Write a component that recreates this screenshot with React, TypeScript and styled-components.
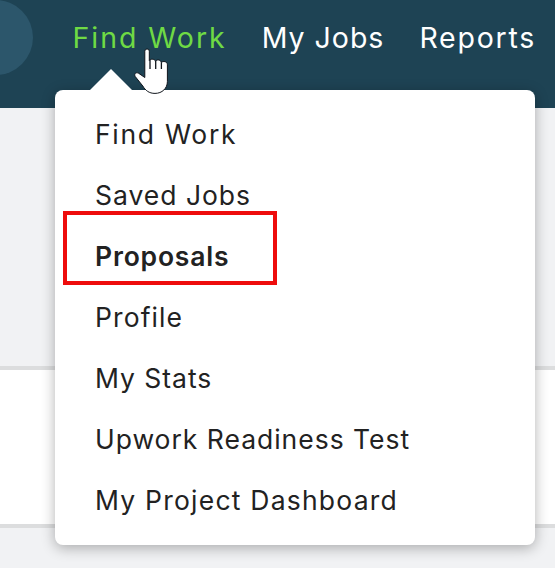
import React from "react";
import styled, { createGlobalStyle } from "styled-components";

const GlobalStyle = createGlobalStyle`
  * { box-sizing: border-box; }
  body { margin: 0; overflow: hidden; background: #f1f2f4; font-family: Inter, "Noto Sans", sans-serif; }
`;

const Page = styled.div`
  position: relative;
  display: flex;
  flex-direction: column;
  gap: 258px;
  width: 555px;
  height: 568px;
  overflow: hidden;
  background: #f1f2f4;
`;

const Header = styled.header`
  flex: none;
  display: flex;
  align-items: flex-start;
  gap: 39.5px;
  height: 108px;
  overflow: hidden;
  background: #1e4354;
`;

const SearchEnd = styled.div`
  flex: none;
  width: 75px;
  height: 75px;
  margin-left: -42px;
  border-radius: 50%;
  background: #2c566b;
`;

const Nav = styled.nav`
  flex: none;
  display: flex;
  gap: 35px;
`;

const NavLink = styled.a<{ $active?: boolean; $spacing: number }>`
  line-height: 76px;
  font-size: 28.5px;
  letter-spacing: ${(p) => p.$spacing}px;
  white-space: nowrap;
  color: ${(p) => (p.$active ? "#6fda44" : "#ffffff")};
`;

const Band = styled.section`
  flex: none;
  height: 162px;
  border: solid #dcddde;
  border-width: 4px 0;
  background: #ffffff;
`;

const Menu = styled.div`
  position: absolute;
  left: 55px;
  top: 90px;
  display: flex;
  flex-direction: column;
  width: 480px;
  height: 455px;
  padding: 14px 0 0 40px;
  border-radius: 8px;
  background: #ffffff;
  box-shadow: 0 3px 14px rgba(0, 0, 0, 0.3);
`;

const Caret = styled.div`
  position: absolute;
  left: 35px;
  top: -21px;
  border: solid transparent;
  border-width: 0 21px 21px;
  border-bottom-color: #ffffff;
`;

const MenuItem = styled.a<{ $strong?: boolean; $spacing: number }>`
  line-height: 61px;
  font-size: 26.5px;
  font-weight: ${(p) => (p.$strong ? 600 : 400)};
  letter-spacing: ${(p) => p.$spacing}px;
  white-space: nowrap;
  color: #222222;
`;

const Highlight = styled.div`
  position: absolute;
  left: 63px;
  top: 211px;
  width: 214px;
  height: 74px;
  border: 4px solid #ee0c0c;
`;

const Pointer = styled.svg`
  position: absolute;
  left: 132px;
  top: 46px;
`;

const links = [
  { label: "Find Work", spacing: 1.95, active: true },
  { label: "My Jobs", spacing: 1 },
  { label: "Reports", spacing: 1.75 },
];

const items = [
  { label: "Find Work", spacing: 1.7 },
  { label: "Saved Jobs", spacing: 0.98 },
  { label: "Proposals", spacing: 0.8, strong: true },
  { label: "Profile", spacing: 1.1 },
  { label: "My Stats", spacing: 0.98 },
  { label: "Upwork Readiness Test", spacing: 0.98 },
  { label: "My Project Dashboard", spacing: 1.22 },
];

export default function App() {
  return (
    <Page>
      <GlobalStyle />
      <Header>
        <SearchEnd />
        <Nav>
          {links.map((l) => (
            <NavLink key={l.label} $active={l.active} $spacing={l.spacing}>
              {l.label}
            </NavLink>
          ))}
        </Nav>
      </Header>
      <Band />
      <Menu>
        <Caret />
        {items.map((i) => (
          <MenuItem key={i.label} $strong={i.strong} $spacing={i.spacing}>
            {i.label}
          </MenuItem>
        ))}
      </Menu>
      <Highlight />
      <Pointer width="38" height="50" viewBox="0 0 38 50">
        <path
          d="M12.800 31.500V5.200a2.250 2.250 0 0 1 4.500 0V14.500C18.500 12.600 23 12.800 23.500 15.300C24.800 13.200 28.700 13.400 29.200 16.500C31 14.800 35.400 15.200 35.400 18.800V35.500C35.400 42.500 30 47.400 23 47.400C17 47.400 13.500 44.500 10.800 40L3.200 30.500C1.800 27.600 4 26 6.500 27.200Z"
          fill="#ffffff"
          stroke="#10151c"
          strokeWidth="1"
          strokeLinejoin="round"
        />
        <path d="M18 13.800V23M23.700 15V23M29.400 16.500V23" stroke="#10151c" strokeWidth="1.300" />
      </Pointer>
    </Page>
  );
}
